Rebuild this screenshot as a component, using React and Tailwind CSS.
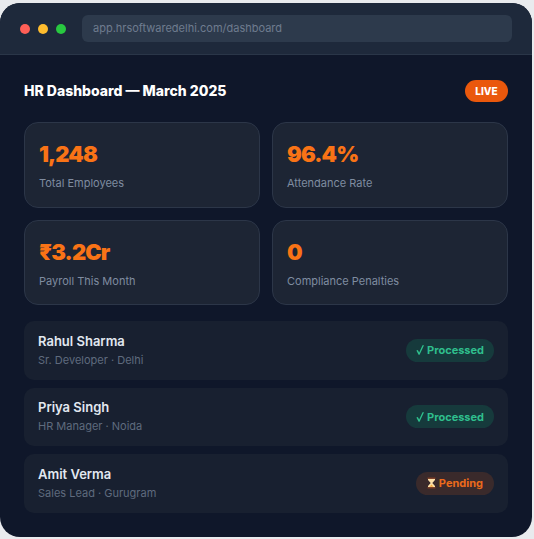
const stats = [
  { value: '1,248', label: 'Total Employees' },
  { value: '96.4%', label: 'Attendance Rate' },
  { value: '₹3.2Cr', label: 'Payroll This Month' },
  { value: '0', label: 'Compliance Penalties' },
];

const employees = [
  { name: 'Rahul Sharma', role: 'Sr. Developer · Delhi', status: 'processed' },
  { name: 'Priya Singh', role: 'HR Manager · Noida', status: 'processed' },
  { name: 'Amit Verma', role: 'Sales Lead · Gurugram', status: 'pending' },
];

function Hourglass() {
  return (
    <svg width="9" height="12" viewBox="0 0 9 12" className="shrink-0">
      <path d="M1 1.5h7v1.6L5.3 6 8 8.9v1.6H1V8.9L3.7 6 1 3.1z" fill="#fde0a8" />
      <path d="M2.5 9.8 4.5 7.6l2 2.2z" fill="#f6a93b" />
      <rect x="0.5" y="0.5" width="8" height="1.4" fill="#7a3b25" />
      <rect x="0.5" y="10.1" width="8" height="1.4" fill="#7a3b25" />
    </svg>
  );
}

function Check() {
  return (
    <svg width="8" height="10" viewBox="0 0 8 10" className="shrink-0" fill="#2fbf8d">
      <path d="M0.4 5.6 1.8 5l1.4 2.4L6.5 0.3H8L3.6 9.7H2.6z" />
    </svg>
  );
}

function StatusBadge({ status }) {
  if (status === 'pending') {
    return (
      <span className="flex h-[23px] items-center gap-[3px] rounded-full bg-[#3a2a2b] px-[11px] text-[11px] font-bold text-[#ea6a1c]">
        <Hourglass />
        Pending
      </span>
    );
  }
  return (
    <span className="flex h-[23px] items-center gap-[3px] rounded-full bg-[#163a3c] px-[10px] text-[11px] font-bold text-[#2fbf8d]">
      <Check />
      Processed
    </span>
  );
}

export default function App() {
  return (
    <div className="h-[539px] w-[534px] overflow-hidden bg-[#e9ebee] pt-[3px] font-['Inter',sans-serif]">
      <div className="h-[534px] w-[532px] overflow-hidden rounded-[20px] bg-[#0f172a]">
        <div className="flex h-[52px] items-center gap-4 border-b border-[#2a3648] bg-[#1e293b] px-5">
          <div className="flex gap-2">
            <span className="h-[10px] w-[10px] rounded-full bg-[#ff5f57]" />
            <span className="h-[10px] w-[10px] rounded-full bg-[#febc2e]" />
            <span className="h-[10px] w-[10px] rounded-full bg-[#28c840]" />
          </div>
          <div className="flex h-[27px] flex-1 items-center rounded-md bg-[#2d3a4c] pl-[11px] pr-3 text-[11px] text-[#6f7c8f]">
            app.hrsoftwaredelhi.com/dashboard
          </div>
        </div>

        <div className="px-6 pt-[25px]">
          <div className="flex h-[22px] items-center justify-between">
            <h1 className="-mt-[2px] text-[14px] font-extrabold text-white">HR Dashboard — March 2025</h1>
            <span className="flex h-[22px] w-[43px] items-center justify-center rounded-full bg-[#ea580c] text-[10px] font-extrabold text-white">
              LIVE
            </span>
          </div>

          <div className="mt-5 grid grid-cols-2 gap-3">
            {stats.map((stat) => (
              <div key={stat.label} className="h-[85.5px] rounded-[14px] border border-[#2c3648] bg-[#1d2534] px-[14px] pt-4">
                <div className="text-[22px] leading-[30px] font-black tracking-[-0.9px] text-[#f97316]">{stat.value}</div>
                <div className="mt-[6px] text-[11px] leading-4 text-[#7f8ca0]">{stat.label}</div>
              </div>
            ))}
          </div>

          <div className="mt-4 flex flex-col gap-2">
            {employees.map((emp) => (
              <div key={emp.name} className="flex h-[58.5px] items-center justify-between rounded-[10px] bg-[#182030] px-[14px]">
                <div>
                  <div className="text-[13px] leading-4 font-semibold text-[#e2e8f0]">{emp.name}</div>
                  <div className="mt-[3px] text-[11px] leading-4 text-[#5f6b7e]">{emp.role}</div>
                </div>
                <StatusBadge status={emp.status} />
              </div>
            ))}
          </div>
        </div>
      </div>
    </div>
  );
}
